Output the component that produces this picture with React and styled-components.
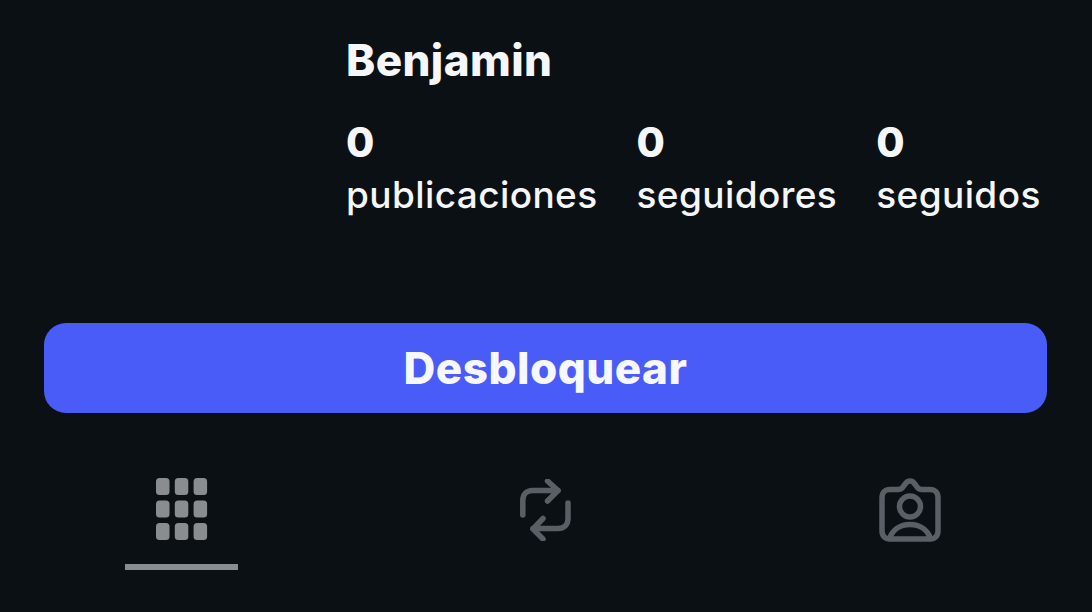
import React from "react";
import styled, { createGlobalStyle } from "styled-components";

const GlobalStyle = createGlobalStyle`
  html, body {
    margin: 0;
    padding: 0;
    background: #0b1014;
  }
  body {
    font-family: "Inter", "Liberation Sans", sans-serif;
    -webkit-font-smoothing: antialiased;
  }
`;

const Page = styled.div`
  width: 1092px;
  height: 612px;
  overflow: hidden;
  background: #0b1014;
  color: #f5f6f7;
  display: flex;
  flex-direction: column;
`;

const ProfileInfo = styled.section`
  height: 323px;
  box-sizing: border-box;
  padding: 35px 0 0 346px;
`;

const Name = styled.h1`
  margin: 0;
  font-size: 44px;
  line-height: 50px;
  font-weight: 800;
  letter-spacing: 0.4px;
`;

const Stats = styled.div`
  display: flex;
  gap: 39px;
  margin-top: 32px;
`;

const Stat = styled.div`
  display: flex;
  flex-direction: column;
`;

const Count = styled.span`
  font-size: 41px;
  line-height: 50px;
  font-weight: 800;
`;

const Label = styled.span`
  font-size: 37px;
  line-height: 56px;
  font-weight: 500;
  letter-spacing: 0.4px;
`;

const ActionRow = styled.div`
  padding: 0 45px 0 44px;
`;

const UnlockButton = styled.button`
  display: block;
  width: 100%;
  height: 90px;
  border: none;
  border-radius: 22px;
  background: #4a5cf8;
  color: #f7f8ff;
  font-family: inherit;
  font-size: 44px;
  font-weight: 800;
  letter-spacing: 0.5px;
`;

const Tabs = styled.nav`
  display: grid;
  grid-template-columns: 363px 365px 364px;
  height: 157px;
  box-sizing: border-box;
  padding-top: 65px;
`;

const Tab = styled.div`
  display: flex;
  flex-direction: column;
  align-items: center;
  color: ${(p) => (p.$active ? "#8a8d90" : "#5a5f66")};
`;

const IconSlot = styled.div`
  height: 64px;
  display: flex;
  align-items: center;
  justify-content: center;
`;

const Indicator = styled.div`
  width: 113px;
  height: 6px;
  margin-top: 22px;
  background: ${(p) => (p.$active ? "#8a8d90" : "transparent")};
`;

const stats = [
  { count: 0, label: "publicaciones" },
  { count: 0, label: "seguidores" },
  { count: 0, label: "seguidos" },
];

const GridIcon = () => (
  <svg width="52" height="64" viewBox="0 0 52 64" fill="currentColor">
    {[0, 22.5, 45].map((y) =>
      [0, 18.8, 37.6].map((x) => (
        <rect key={`${x}-${y}`} x={x} y={y} width="13.5" height="17" rx="3.5" />
      ))
    )}
  </svg>
);

const RepostIcon = () => (
  <svg
    width="52"
    height="62"
    viewBox="0 0 52 62"
    fill="none"
    stroke="currentColor"
    strokeWidth="5.5"
    strokeLinecap="round"
    strokeLinejoin="round"
  >
    <path d="M2.8 36V21.5C2.8 15.5 6.5 11.5 12.5 11.5H38" />
    <path d="M27.5 2L38 11.5L27.5 22" />
    <path d="M48 24V39.5C48 45.5 44 49.5 38 49.5H13" />
    <path d="M23 39.5L13 50L23 60" />
  </svg>
);

const TaggedIcon = () => (
  <svg
    width="62"
    height="64"
    viewBox="0 0 62 64"
    fill="none"
    stroke="currentColor"
    strokeWidth="5.5"
    strokeLinecap="round"
    strokeLinejoin="round"
  >
    <path d="M11 11.5H19C21 11.5 22.5 10.8 23.8 9.2L27 5C29 2.2 33 2.2 35 5L38.2 9.2C39.5 10.8 41 11.5 43 11.5H51C56 11.5 59 14.5 59 19.5V53C59 58 56 61 51 61H11C6 61 3 58 3 53V19.5C3 14.5 6 11.5 11 11.5Z" />
    <circle cx="31" cy="28.5" r="10.5" />
    <path d="M10.5 60.5C13.5 52 21 46.5 31 46.5C41 46.5 48.5 52 51.5 60.5" />
  </svg>
);

export default function App() {
  return (
    <Page>
      <GlobalStyle />
      <ProfileInfo>
        <Name>Benjamin</Name>
        <Stats>
          {stats.map((s) => (
            <Stat key={s.label}>
              <Count>{s.count}</Count>
              <Label>{s.label}</Label>
            </Stat>
          ))}
        </Stats>
      </ProfileInfo>
      <ActionRow>
        <UnlockButton>Desbloquear</UnlockButton>
      </ActionRow>
      <Tabs>
        <Tab $active>
          <IconSlot>
            <GridIcon />
          </IconSlot>
          <Indicator $active />
        </Tab>
        <Tab>
          <IconSlot>
            <RepostIcon />
          </IconSlot>
          <Indicator />
        </Tab>
        <Tab>
          <IconSlot>
            <TaggedIcon />
          </IconSlot>
          <Indicator />
        </Tab>
      </Tabs>
    </Page>
  );
}
